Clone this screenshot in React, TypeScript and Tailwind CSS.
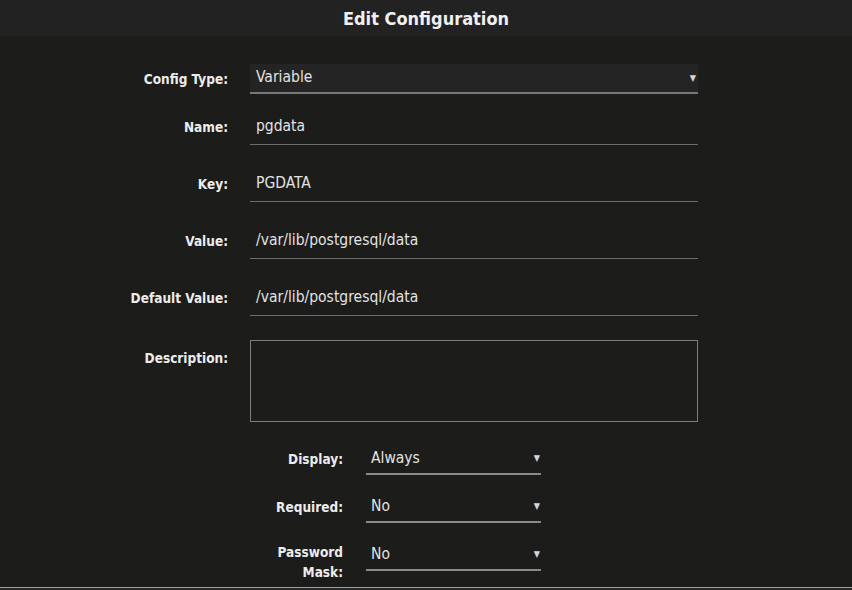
import React from 'react';

const font = { fontFamily: '"DejaVu Sans Condensed", "Liberation Sans", sans-serif' };

function Caret() {
  return <span className="text-[9px] leading-none text-[#d6d6d6]">▼</span>;
}

function Label({ children, className = '' }: { children: React.ReactNode; className?: string }) {
  return <div className={`shrink-0 text-right text-[13.5px] font-bold text-[#ececec] ${className}`}>{children}</div>;
}

function FieldRow({ label, value }: { label: string; value: string }) {
  return (
    <div className="flex items-center">
      <Label className="w-[228px]">{label}</Label>
      <div className="ml-[22px] flex h-[36px] w-[448px] items-center border-b border-[#6e6e6e] pl-[6px] text-[15.5px] text-[#e2e2e2]">
        {value}
      </div>
    </div>
  );
}

function SmallSelect({ label, value, wrap }: { label: string; value: string; wrap?: boolean }) {
  return (
    <div className="flex items-start">
      <Label className={`w-[343px] leading-[20px] ${wrap ? 'pl-[268px] pt-[2px]' : 'pt-[5px]'}`}>{label}</Label>
      <div className="ml-[23px] flex h-[31px] w-[175px] items-center justify-between border-b-2 border-[#8a8a8a] pl-[5px] pr-[1px] text-[15.5px] text-[#e2e2e2]">
        <span>{value}</span>
        <Caret />
      </div>
    </div>
  );
}

export default function App() {
  return (
    <div className="h-[590px] w-[852px] overflow-hidden bg-[#1c1c1b]" style={font}>
      {/* Header */}
      <div className="flex h-[36px] items-center justify-center bg-[#222222] text-[18px] font-bold text-[#f0f0f0]">
        Edit Configuration
      </div>

      <div className="flex h-[551px] flex-col">
        {/* Config type select */}
        <div className="mt-[28px] flex items-center">
          <Label className="w-[228px]">Config Type:</Label>
          <div className="ml-[22px] flex h-[30px] w-[448px] items-center justify-between border-b-2 border-[#777777] bg-[#242424] pl-[6px] pr-[2px] text-[15.5px] text-[#e2e2e2]">
            <span>Variable</span>
            <Caret />
          </div>
        </div>

        <div className="mt-[15px] flex flex-col gap-[21px]">
          <FieldRow label="Name:" value="pgdata" />
          <FieldRow label="Key:" value="PGDATA" />
          <FieldRow label="Value:" value="/var/lib/postgresql/data" />
          <FieldRow label="Default Value:" value="/var/lib/postgresql/data" />
        </div>

        {/* Description */}
        <div className="mt-[24px] flex items-start">
          <Label className="w-[228px] pt-[8px]">Description:</Label>
          <div className="ml-[22px] h-[82px] w-[448px] border border-[#7c7c7c] bg-[#1c1c1b]" />
        </div>

        <div className="mt-[22px] flex flex-col gap-[17px]">
          <SmallSelect label="Display:" value="Always" />
          <SmallSelect label="Required:" value="No" />
          <SmallSelect label="Password Mask:" value="No" wrap />
        </div>
      </div>

      <div className="h-[3px] border-t border-[#a0a0a0] bg-[#262626]" />
    </div>
  );
}
